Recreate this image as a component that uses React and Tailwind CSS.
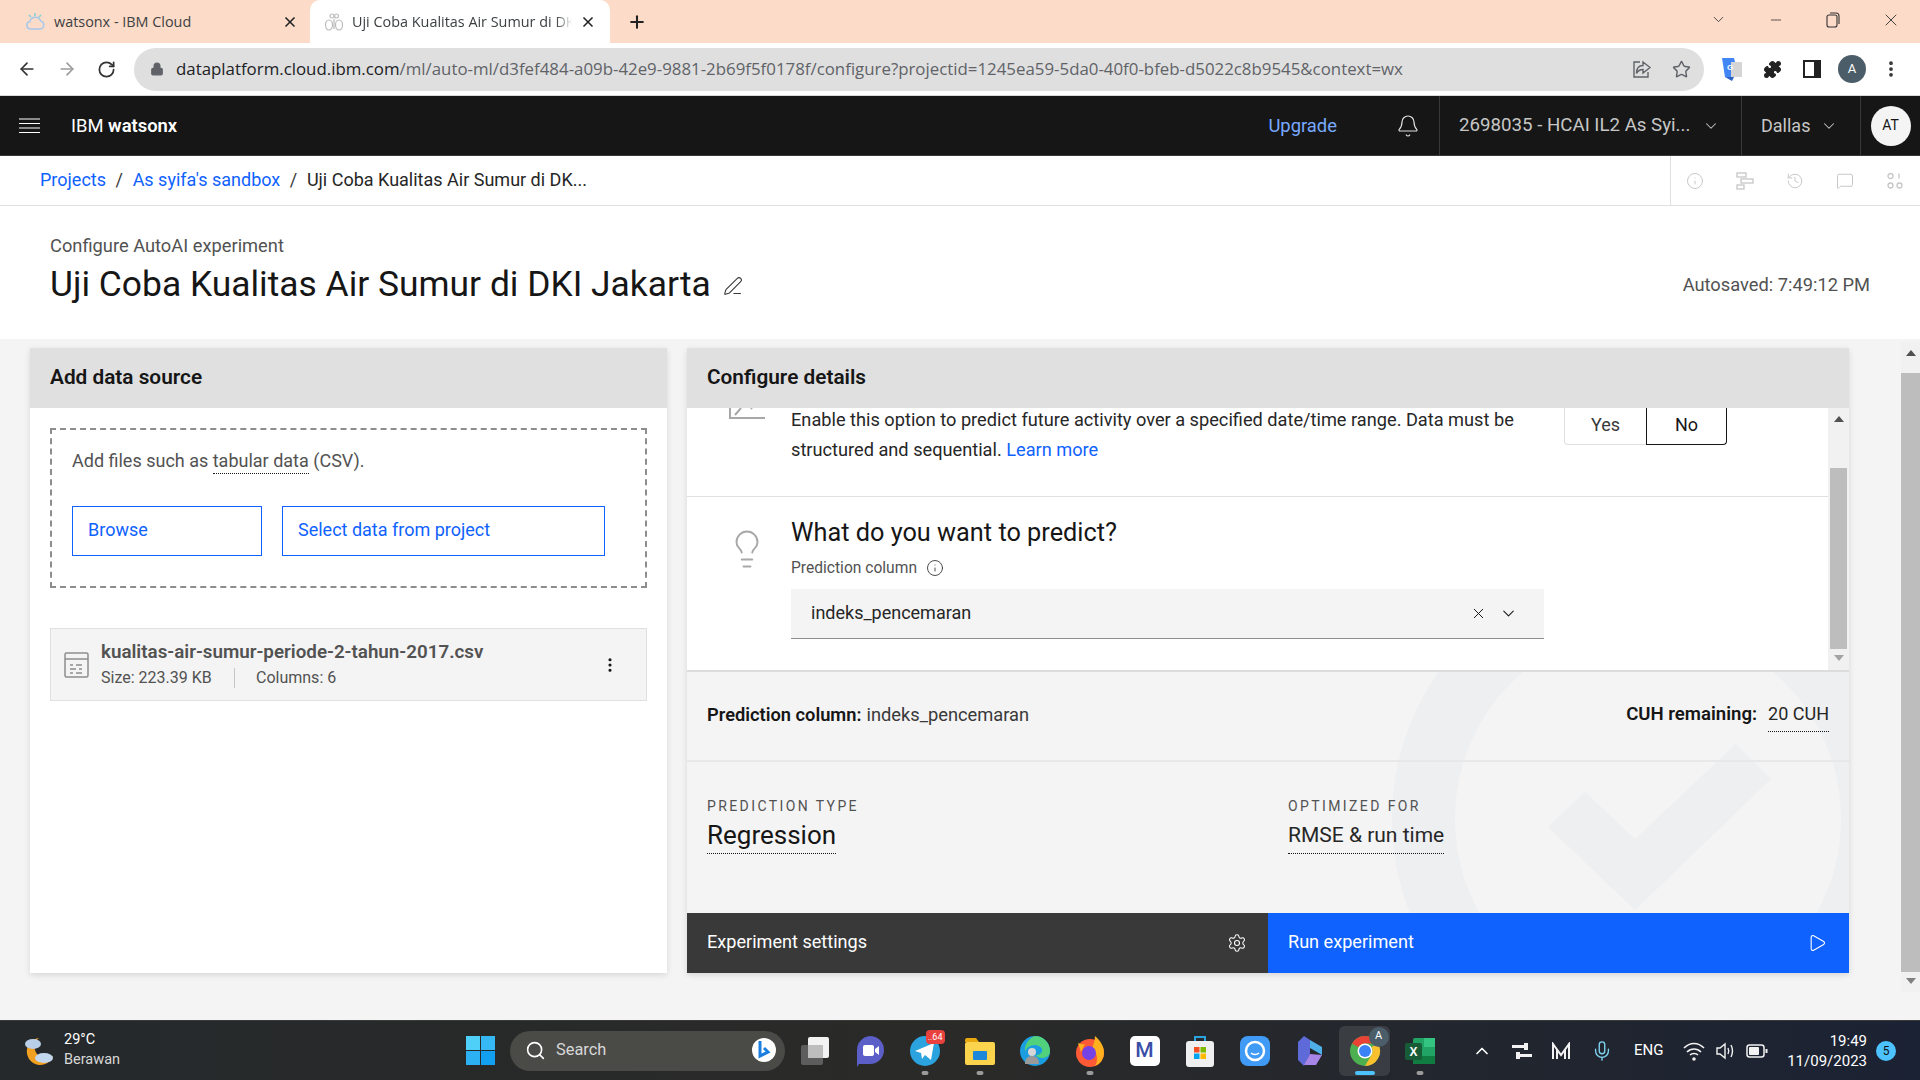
import {
  ArrowLeft, ArrowRight, RotateCw, Lock, Star, Bell, ChevronDown, ChevronUp, Info, X, Plus, Minus,
  Lightbulb, Settings, Play, PenLine, Search, Mic, EllipsisVertical, Puzzle, History, MessageSquare,
} from "lucide-react";

function Tab({ active, icon, title }) {
  return (
    <div className={active ? "flex h-full w-[300px] items-center gap-2 rounded-t-[10px] bg-white pl-[14px] pr-[14px]" : "flex h-full w-[310px] items-center gap-2 pl-[24px] pr-[12px]"}>
      {icon}
      <span className={active ? "min-w-0 flex-1 overflow-hidden whitespace-nowrap text-[14.4px] text-[#3c4043] [mask-image:linear-gradient(to_left,transparent,black_16px)]" : "min-w-0 flex-1 overflow-hidden whitespace-nowrap text-[14.4px] text-[#3c4043]"}>{title}</span>
      <X size={16} strokeWidth={2.5} className="shrink-0 text-[#222]" />
    </div>
  );
}

function CloudFav() {
  return (
    <svg width="22" height="22" viewBox="0 0 22 22" fill="none" className="shrink-0">
      <path d="M6 18h10a4 4 0 0 0 .6-7.9A5.5 5.5 0 0 0 6 10.5 3.8 3.8 0 0 0 6 18z" stroke="#a8c8ec" strokeWidth="1.5" />
      <path d="M11 2v3M5 4l2 2M17 4l-2 2" stroke="#7fd0d8" strokeWidth="1.5" />
    </svg>
  );
}

function BeeFav() {
  return (
    <svg width="20" height="20" viewBox="0 0 20 20" fill="none" stroke="#bbb" strokeWidth="1.2" className="shrink-0">
      <circle cx="8" cy="4" r="2" />
      <circle cx="12.5" cy="4" r="2" />
      <ellipse cx="5" cy="13" rx="3.5" ry="5" />
      <ellipse cx="15" cy="13" rx="3.5" ry="5" />
      <path d="M10 7v10" />
    </svg>
  );
}

function Crumb({ children }) {
  return <span className="text-[#0f62fe]">{children}</span>;
}

function PanelHeader({ children }) {
  return (
    <div className="flex h-[60px] shrink-0 items-center bg-[#e0e0e0] pb-[1px] pl-[20px] text-[20.8px] font-semibold text-[#161616]">
      {children}
    </div>
  );
}

function TaskIcon({ dot, active, children }) {
  return (
    <div className={active ? "relative mx-[2px] flex h-[50px] w-[51px] items-center justify-center rounded-md bg-white/10" : "relative flex h-[50px] w-[55px] items-center justify-center"}>
      {children}
      {dot && <span className="absolute bottom-[1px] left-1/2 h-[4px] w-[7px] -translate-x-1/2 rounded-full bg-[#9b9b9b]" />}
      {active && <span className="absolute bottom-[1px] left-1/2 h-[4px] w-[20px] -translate-x-1/2 rounded-full bg-[#4cc2ff]" />}
    </div>
  );
}

function WeatherIcon() {
  return (
    <svg width="32" height="32" viewBox="0 0 32 32">
      <path d="M15 3A13.500 13.500 0 1 0 29 21A11 11 0 0 1 15 3z" fill="#f2a01f" />
      <ellipse cx="9" cy="9" rx="8" ry="5" fill="#b9cfe8" />
      <ellipse cx="20" cy="23" rx="9" ry="5" fill="#c2d6ee" />
    </svg>
  );
}

function WinLogo() {
  return (
    <svg width="29" height="29" viewBox="0 0 29 29">
      <rect width="14" height="14" fill="#4fd0f8" />
      <rect x="15" width="14" height="14" fill="#35b8f4" />
      <rect y="15" width="14" height="14" fill="#2cb2f3" />
      <rect x="15" y="15" width="14" height="14" fill="#129ff0" />
    </svg>
  );
}

function TaskView() {
  return (
    <svg width="30" height="30" viewBox="0 0 30 30">
      <rect x="1" y="9" width="22" height="20" rx="2" fill="#5d5d5d" />
      <rect x="8" y="1" width="21" height="21" rx="2" fill="#f2f2f2" />
      <rect x="8" y="9" width="15" height="13" fill="#bdbdbd" />
    </svg>
  );
}

function MeetIcon() {
  return (
    <svg width="30" height="32" viewBox="0 0 30 32">
      <path d="M15 1a14 14 0 0 1 0 28H4l-2 3V15A14 14 0 0 1 15 1z" fill="#5b5fc7" />
      <rect x="8" y="10" width="11" height="11" rx="2" fill="#fff" />
      <path d="M20 14l4-3v9l-4-3z" fill="#fff" />
    </svg>
  );
}

function TelegramIcon() {
  return (
    <div className="relative">
      <svg width="30" height="30" viewBox="0 0 30 30">
        <circle cx="15" cy="15" r="15" fill="#2aa3de" />
        <path d="M5 15l19-8-3 17-6-5-3 4-1-6z" fill="#fff" />
      </svg>
      <span className="absolute right-[-5px] top-[-6px] rounded-[4px] bg-[#e8413e] px-[2px] text-[9px] leading-[14px] text-white">..64</span>
    </div>
  );
}

function FolderIcon() {
  return (
    <svg width="30" height="28" viewBox="0 0 30 28">
      <path d="M0 3a2 2 0 0 1 2-2h9l3 4H0z" fill="#e8a80f" />
      <rect y="5" width="30" height="23" rx="2" fill="#fcd34d" />
      <rect x="8" y="14" width="14" height="9" rx="1" fill="#1e88d8" />
    </svg>
  );
}

function EdgeIcon() {
  return (
    <svg width="30" height="32" viewBox="0 0 30 32">
      <circle cx="15" cy="16" r="15" fill="#1b9de2" />
      <path d="M15 1a15 15 0 0 1 15 15c0 5-4 7-8 7-5 0-6-3-6-3 8 0 9-9-1-10-5 0-9 3-10 7A15 15 0 0 1 15 1z" fill="#52d17c" />
      <circle cx="12" cy="17" r="4" fill="#d6d6d6" />
      <path d="M5 29c0-6 3-8 7-8s7 2 7 8z" fill="#9a9a9a" />
    </svg>
  );
}

function FirefoxIcon() {
  return (
    <svg width="30" height="32" viewBox="0 0 30 32">
      <circle cx="15" cy="18" r="14" fill="#ff5a36" />
      <path d="M20 1c6 5 9 11 9 17a14 14 0 0 1-9 13c4-6 2-14-3-17 1-4 3-8 3-13z" fill="#ffb01f" />
      <path d="M3 8c3 1 5 2 7 1L6 17z" fill="#ffb01f" />
      <circle cx="14" cy="18" r="7" fill="#7542e5" />
    </svg>
  );
}

function MailIcon() {
  return (
    <div className="flex h-[30px] w-[30px] items-center justify-center rounded-[5px] bg-white text-[21px] font-medium text-[#3a4ea8]">M</div>
  );
}

function StoreIcon() {
  return (
    <svg width="30" height="32" viewBox="0 0 30 32">
      <path d="M10 6V2h10v4" fill="none" stroke="#2aa3de" strokeWidth="2" />
      <rect x="1" y="6" width="28" height="26" rx="3" fill="#efefef" />
      <rect x="9" y="12" width="5.5" height="5.5" fill="#f25022" />
      <rect x="15.5" y="12" width="5.5" height="5.5" fill="#7fba00" />
      <rect x="9" y="18.5" width="5.5" height="5.5" fill="#00a4ef" />
      <rect x="15.5" y="18.5" width="5.5" height="5.5" fill="#ffb900" />
    </svg>
  );
}

function ChatIcon() {
  return (
    <svg width="30" height="30" viewBox="0 0 30 30">
      <rect width="30" height="30" rx="8" fill="#3f9bf5" />
      <circle cx="15" cy="15" r="9" fill="none" stroke="#fff" strokeWidth="2.5" />
      <path d="M11 17c2 2 6 2 8 0" fill="none" stroke="#fff" strokeWidth="1.5" />
    </svg>
  );
}

function CopilotIcon() {
  return (
    <svg width="28" height="32" viewBox="0 0 28 32">
      <path d="M8 1l6 4v14l-6 12-6-6V7z" fill="#5d6ad8" />
      <path d="M14 5l12 7v8l-12-7z" fill="#4fb0e8" />
      <path d="M26 20l-6 10H8l6-11z" fill="#a886e8" />
    </svg>
  );
}

function ChromeIcon() {
  return (
    <div className="relative">
      <svg width="32" height="32" viewBox="0 0 32 32">
        <circle cx="16" cy="16" r="15" fill="#4caf50" />
        <path d="M16 1a15 15 0 0 1 13 7.5H16a7.5 7.5 0 0 0-6.5 3.7L3 8.5A15 15 0 0 1 16 1z" fill="#ea4335" />
        <path d="M29 8.5A15 15 0 0 1 16 31l6.5-11.3A7.5 7.5 0 0 0 22.5 12z" fill="#fbc02d" />
        <circle cx="16" cy="16" r="7.5" fill="#fff" />
        <circle cx="16" cy="16" r="6" fill="#3b82f6" />
      </svg>
      <span className="absolute right-[-8px] top-[-8px] flex h-[20px] w-[20px] items-center justify-center rounded-full bg-[#4a5d68] text-[11px] text-white">A</span>
    </div>
  );
}

function ExcelIcon() {
  return (
    <svg width="30" height="30" viewBox="0 0 30 30">
      <rect x="8" y="2" width="22" height="26" rx="2" fill="#21a366" />
      <rect x="19" y="2" width="11" height="9" fill="#33c481" />
      <rect x="8" y="20" width="22" height="8" fill="#107c41" />
      <rect y="7" width="17" height="17" rx="2" fill="#185c37" />
      <text x="8.5" y="20" textAnchor="middle" fontSize="12" fontWeight="700" fill="#fff" fontFamily="Liberation Sans">X</text>
    </svg>
  );
}

export default function App() {
  return (
    <div className="flex h-[1080px] w-[1920px] flex-col overflow-hidden bg-white font-['Roboto',sans-serif]">
      {/* browser tabs */}
      <div className="flex h-[43px] shrink-0 items-stretch bg-[#fcdbc8] font-['Open_Sans',sans-serif]">
        <Tab icon={<CloudFav />} title="watsonx - IBM Cloud" />
        <Tab active icon={<BeeFav />} title="Uji Coba Kualitas Air Sumur di DK" />
        <div className="ml-[17px] flex items-center">
          <Plus size={20} strokeWidth={2.5} className="text-[#222]" />
        </div>
        <div className="ml-auto flex items-center pb-[4px] text-[#333]">
          <ChevronDown size={17} strokeWidth={1.2} className="mr-[41px]" />
          <Minus size={16} strokeWidth={1.2} className="mr-[42px]" />
          <svg width="14" height="16" viewBox="0 0 14 16" fill="none" stroke="#333" strokeWidth="1.1" className="mr-[41px]">
            <rect x="1" y="3" width="10" height="12" rx="2" />
            <path d="M4 1h6a3 3 0 0 1 3 3v8" />
          </svg>
          <X size={20} strokeWidth={1.1} className="mr-[19px]" />
        </div>
      </div>

      {/* address bar */}
      <div className="flex h-[53px] shrink-0 items-center border-b border-[#d9d9d9] bg-white pl-[17px]">
        <ArrowLeft size={20} strokeWidth={2} className="text-[#333]" />
        <ArrowRight size={20} strokeWidth={2} className="ml-[20px] text-[#9c9c9c]" />
        <RotateCw size={19} strokeWidth={2.2} className="ml-[20px] text-[#333]" />
        <div className="ml-[18px] flex h-[43px] w-[1570px] items-center rounded-full bg-[#dfdfdf] pl-[16px] font-['Open_Sans',sans-serif]">
          <Lock size={14} fill="#5f6368" strokeWidth={2} className="text-[#5f6368]" />
          <div className="ml-[12px] whitespace-nowrap text-[16.85px]">
            <span className="text-[#202124]">dataplatform.cloud.ibm.com</span>
            <span className="text-[#5f6368]">/ml/auto-ml/d3fef484-a09b-42e9-9881-2b69f5f0178f/configure?projectid=1245ea59-5da0-40f0-bfeb-d5022c8b9545&context=wx</span>
          </div>
          <svg width="20" height="20" viewBox="0 0 20 20" fill="none" stroke="#5f6368" strokeWidth="1.4" className="ml-auto">
            <path d="M8 3H2v15h14v-5" />
            <path d="M11 3l7 5.5-7 5.5v-3.5c-3 0-5 1-6.5 4 0-5 2.500-8 6.500-8z" />
          </svg>
          <Star size={19} strokeWidth={1.8} className="ml-[20px] mr-[13px] text-[#5f6368]" />
        </div>
        <svg width="20" height="24" viewBox="0 0 20 24" className="ml-[18px]">
          <path d="M0 1h12l5 19H3z" fill="#4285f4" />
          <path d="M9 5h11v15H9z" fill="#d5d5d5" />
          <path d="M3 20h9l-2 4z" fill="#2f62c4" />
          <text x="5" y="13" fontSize="8" fontWeight="700" fill="#fff" fontFamily="Liberation Sans">G</text>
        </svg>
        <Puzzle size={19} fill="#222" strokeWidth={1.5} className="ml-[21px] text-[#222]" />
        <svg width="18" height="18" viewBox="0 0 18 18" className="ml-[21px]">
          <rect x="1" y="1" width="16" height="16" fill="none" stroke="#222" strokeWidth="2" />
          <rect x="11" y="1" width="6" height="16" fill="#222" />
        </svg>
        <div className="ml-[17px] flex h-[28px] w-[28px] items-center justify-center rounded-full bg-[#4a5d68] text-[13px] text-white">A</div>
        <EllipsisVertical size={20} strokeWidth={2.5} className="ml-[15px] text-[#333]" />
      </div>

      {/* watsonx header */}
      <div className="flex h-[60px] shrink-0 items-stretch border-b border-[#393939] bg-[#161616] text-[#c6c6c6]">
        <div className="flex w-[71px] items-center pl-[19px]">
          <svg width="21" height="16" viewBox="0 0 21 16" stroke="#fff" strokeWidth="1.2">
            <path d="M0 1h21M0 5.500h21M0 10h21M0 14.500h21" />
          </svg>
        </div>
        <div className="flex items-center text-[18.4px] text-white">
          IBM&nbsp;<span className="font-semibold">watsonx</span>
        </div>
        <div className="ml-auto flex items-center pr-[40px] text-[18.4px] text-[#78a9ff]">Upgrade</div>
        <div className="flex w-[62px] items-center justify-center">
          <Bell size={24} strokeWidth={1.2} className="text-[#e0e0e0]" />
        </div>
        <div className="flex w-[302px] items-center border-l border-[#393939] pl-[19px] text-[18.7px]">
          <span className="w-[242px] whitespace-nowrap">2698035 - HCAI IL2 As Syi...</span>
          <ChevronDown size={18} strokeWidth={1.4} className="ml-[1px]" />
        </div>
        <div className="flex w-[119px] items-center border-l border-[#393939] pl-[19px] text-[18px]">
          <span className="w-[57px]">Dallas</span>
          <ChevronDown size={18} strokeWidth={1.4} className="ml-[2px]" />
        </div>
        <div className="flex w-[60px] items-center justify-center border-l border-[#393939]">
          <div className="flex h-[40px] w-[40px] items-center justify-center rounded-full bg-[#f4f4f4] text-[14px] text-[#161616]">AT</div>
        </div>
      </div>

      {/* breadcrumb */}
      <div className="flex h-[50px] shrink-0 items-stretch border-b border-[#e0e0e0] bg-white">
        <div className="flex items-center gap-[9.6px] pb-[2px] pl-[40px] text-[18px] text-[#393939]">
          <Crumb>Projects</Crumb>
          <span>/</span>
          <Crumb>As syifa's sandbox</Crumb>
          <span>/</span>
          <span className="text-[#262626]">Uji Coba Kualitas Air Sumur di DK...</span>
        </div>
        <div className="ml-auto flex w-[250px] items-center gap-[32px] border-l border-[#e0e0e0] pl-[15px] text-[#c6c6c6]">
          <Info size={18} strokeWidth={1.3} />
          <svg width="18" height="18" viewBox="0 0 18 18" fill="none" stroke="currentColor" strokeWidth="1.3">
            <rect x="1" y="1" width="9" height="4" />
            <rect x="5" y="7" width="12" height="4" />
            <rect x="1" y="13" width="7" height="4" />
          </svg>
          <History size={18} strokeWidth={1.3} />
          <MessageSquare size={18} strokeWidth={1.3} />
          <svg width="18" height="18" viewBox="0 0 18 18" fill="none" stroke="currentColor" strokeWidth="1.3">
            <circle cx="4.500" cy="4" r="2.500" />
            <path d="M13 1.500v5" />
            <circle cx="4.500" cy="13.500" r="2.500" />
            <circle cx="13.500" cy="13.500" r="2.500" />
          </svg>
        </div>
      </div>

      {/* page title */}
      <div className="flex h-[133px] shrink-0 bg-white pl-[50px] pr-[50px]">
        <div className="pt-[28px]">
          <div className="text-[18.3px] leading-[24px] text-[#525252]">Configure AutoAI experiment</div>
          <div className="mt-[4px] flex items-center">
            <span className="text-[35.4px] leading-[44px] text-[#161616]">Uji Coba Kualitas Air Sumur di DKI Jakarta</span>
            <PenLine size={20} strokeWidth={1.3} className="ml-[12px] mt-[4px] text-[#393939]" />
          </div>
        </div>
        <div className="ml-auto pt-[66px] text-[18.3px] leading-[26px] text-[#525252]">Autosaved: 7:49:12 PM</div>
      </div>

      {/* main */}
      <div className="flex min-h-0 flex-1 items-start bg-[#f4f4f4] pt-[9px]">
        <div className="ml-[30px] flex h-[625px] w-[637px] shrink-0 flex-col bg-white shadow-[0_2px_6px_rgba(0,0,0,0.12)]">
          <PanelHeader>Add data source</PanelHeader>
          <div className="px-[20px] pt-[20px]">
            <div className="h-[160px] border-2 border-dashed border-[#8d8d8d] pl-[20px] pt-[18px]">
              <div className="text-[18px] leading-[26px] text-[#525252]">
                Add files such as <span className="border-b border-dotted border-[#161616] pb-[2px]">tabular data</span> (CSV).
              </div>
              <div className="mt-[32px] flex gap-[20px]">
                <div className="flex h-[50px] w-[190px] items-center border border-[#0f62fe] pb-[3px] pl-[15px] text-[18px] text-[#0f62fe]">Browse</div>
                <div className="flex h-[50px] w-[323px] items-center border border-[#0f62fe] pb-[3px] pl-[15px] text-[18px] text-[#0f62fe]">Select data from project</div>
              </div>
            </div>
            <div className="mt-[40px] flex h-[73px] items-center border border-[#e0e0e0] bg-[#f4f4f4] pl-[13px] pr-[27px]">
              <svg width="25" height="26" viewBox="0 0 25 26" fill="none" stroke="#8d8d8d" strokeWidth="1.500">
                <rect x="1" y="1" width="23" height="24" rx="1.500" />
                <path d="M1 7h23M6 13h3M12 13h6M6 17h6M15 17h3M6 21h3M12 21h6" />
              </svg>
              <div className="ml-[12px]">
                <div className="text-[18.8px] font-semibold leading-[22px] text-[#525252]">kualitas-air-sumur-periode-2-tahun-2017.csv</div>
                <div className="mt-[5px] flex items-center text-[16px] leading-[20px] text-[#525252]">
                  <span className="w-[134px] border-r border-[#c6c6c6]">Size: 223.39 KB</span>
                  <span className="ml-[21px]">Columns: 6</span>
                </div>
              </div>
              <EllipsisVertical size={18} strokeWidth={2.2} className="ml-auto text-[#161616]" />
            </div>
          </div>
        </div>

        <div className="ml-[20px] flex h-[625px] w-[1162px] shrink-0 flex-col bg-white shadow-[0_2px_6px_rgba(0,0,0,0.12)]">
          <PanelHeader>Configure details</PanelHeader>
          <div className="flex h-[262px] shrink-0">
            <div className="min-w-0 flex-1">
              <div className="flex h-[89px] border-b border-[#e0e0e0]">
                <svg width="36" height="11" viewBox="0 0 36 11" fill="none" stroke="#a8a8a8" strokeWidth="2" className="ml-[42px] shrink-0">
                  <path d="M1 0v10h35M6 7l6-7M22 0l1 1" />
                </svg>
                <div className="ml-[26px] mt-[-3px] w-[773px] text-[18.2px] leading-[30px] text-[#262626]">
                  <div className="whitespace-nowrap">Enable this option to predict future activity over a specified date/time range. Data must be</div>
                  <div className="whitespace-nowrap">structured and sequential. <span className="text-[#0f62fe]">Learn more</span></div>
                </div>
                <div className="flex h-[37px] text-[18px] text-[#393939]">
                  <div className="flex w-[82px] items-center justify-center rounded-bl-[4px] border-b border-l border-[#e0e0e0] pb-[3px]">Yes</div>
                  <div className="flex w-[81px] items-center justify-center rounded-br-[4px] border-b border-l border-r border-[#161616] pb-[3px] text-[#161616]">No</div>
                </div>
              </div>
              <div className="flex pt-[20px]">
                <Lightbulb size={42} strokeWidth={1.1} className="ml-[39px] mt-[11px] shrink-0 text-[#a8a8a8]" />
                <div className="ml-[23px] w-[753px]">
                  <div className="text-[25.3px] leading-[32px] text-[#161616]">What do you want to predict?</div>
                  <div className="mt-[9px] flex items-center text-[15.6px] leading-[20px] text-[#525252]">
                    Prediction column
                    <Info size={18} strokeWidth={1.2} className="ml-[9px] text-[#393939]" />
                  </div>
                  <div className="mt-[11px] flex h-[50px] items-center border-b border-[#8d8d8d] bg-[#f4f4f4] pb-[3px] pl-[20px] pr-[26px] text-[18px] text-[#262626]">
                    indeks_pencemaran
                    <X size={17} strokeWidth={1.4} className="ml-auto mr-[12px] mt-[3px] text-[#161616]" />
                    <ChevronDown size={19} strokeWidth={1.3} className="mt-[3px] text-[#161616]" />
                  </div>
                </div>
              </div>
            </div>
            {/* inner scrollbar */}
            <div className="flex w-[21px] shrink-0 flex-col items-center bg-[#f1f1f1] pt-[8px]">
              <span className="h-0 w-0 border-x-[5px] border-b-[6px] border-x-transparent border-b-[#505050]" />
              <div className="mt-[46px] h-[181px] w-[17px] bg-[#bdbdbd]" />
              <span className="mt-[6px] h-0 w-0 border-x-[5px] border-t-[6px] border-x-transparent border-t-[#a3a3a3]" />
            </div>
          </div>

          {/* summary */}
          <div className="relative flex min-h-0 flex-1 flex-col overflow-hidden border-t-2 border-[#dcdcdc] bg-[#f4f4f4]">
            <svg className="absolute left-0 top-0" width="1162" height="243" viewBox="687 670 1162 243" fill="#eeeff1">
              <path fillRule="evenodd" d="M1648 561a256 256 0 1 0 0 512a256 256 0 1 0 0-512zM1648 624a193 193 0 1 1 0 386a193 193 0 1 1 0-386z" />
              <path d="M1548 825L1635 908L1771 777L1736 742L1635 837L1585 790z" />
            </svg>
            <div className="relative flex h-[90px] shrink-0 items-center border-b-2 border-[#e8e8e8] px-[20px] text-[18.3px] text-[#393939]">
              <span className="mb-[3px] font-semibold text-[#161616]">Prediction column:</span>
              <span className="mb-[3px] ml-[5px]">indeks_pencemaran</span>
              <span className="mb-[3px] ml-auto text-[18.6px] font-semibold text-[#161616]">CUH remaining:</span>
              <span className="ml-[11px] border-b border-dotted border-[#161616] pb-[4px] text-[18px] text-[#262626]">20 CUH</span>
            </div>
            <div className="relative flex pl-[20px] pt-[34px]">
              <div className="w-[581px]">
                <div className="text-[14px] leading-[20px] tracking-[2.4px] text-[#525252]">PREDICTION TYPE</div>
                <div className="mt-[1px] inline-block border-b border-dotted border-[#161616] text-[26px] leading-[36px] text-[#161616]">Regression</div>
              </div>
              <div>
                <div className="text-[14px] leading-[20px] tracking-[2.4px] text-[#525252]">OPTIMIZED FOR</div>
                <div className="mt-[1px] inline-block border-b border-dotted border-[#161616] text-[21px] leading-[36px] text-[#262626]">RMSE &amp; run time</div>
              </div>
            </div>
          </div>

          {/* footer buttons */}
          <div className="flex h-[60px] shrink-0 text-[18.1px] text-white">
            <div className="flex w-[581px] items-center justify-between bg-[#393939] pb-[2px] pl-[20px] pr-[21px]">
              Experiment settings
              <Settings size={20} strokeWidth={1.3} className="mt-[2px]" />
            </div>
            <div className="flex flex-1 items-center justify-between bg-[#0f62fe] pb-[2px] pl-[20px] pr-[22px]">
              Run experiment
              <Play size={20} strokeWidth={1.3} className="mt-[2px]" />
            </div>
          </div>
        </div>

        {/* page scrollbar */}
        <div className="ml-auto mt-[-6px] flex h-[650px] w-[19px] flex-col items-center bg-[#f1f1f1] pt-[8px]">
          <span className="h-0 w-0 border-x-[5px] border-b-[6px] border-x-transparent border-b-[#505050]" />
          <div className="mt-[17px] h-[599px] w-[19px] bg-[#bdbdbd]" />
          <span className="mt-[6px] h-0 w-0 border-x-[5px] border-t-[6px] border-x-transparent border-t-[#808080]" />
        </div>
      </div>

      {/* taskbar */}
      <div className="flex h-[60px] shrink-0 items-center border-t border-[#3a3a3a] bg-gradient-to-r from-[#25292b] via-[#2a2a28] to-[#1b2233] text-white">
        <div className="flex w-[453px] items-center pl-[24px]">
          <WeatherIcon />
          <div className="mb-[2px] ml-[8px] text-[14.5px] leading-[20px]">
            <div>29°C</div>
            <div className="text-[#d8d8d8]">Berawan</div>
          </div>
        </div>
        <TaskIcon><WinLogo /></TaskIcon>
        <div className="ml-[2px] flex h-[40px] w-[275px] items-center rounded-full bg-[#4a4a47] pl-[15px] pr-[8px] text-[#d8d8d8]">
          <Search size={21} strokeWidth={1.8} className="text-white" />
          <span className="ml-[10px] text-[16.4px]">Search</span>
          <svg width="26" height="30" viewBox="0 0 26 30" className="ml-auto">
            <circle cx="13" cy="14" r="12" fill="#fff" />
            <path d="M9 5v15l8-4-4-4" fill="none" stroke="#1b7fe0" strokeWidth="3" />
          </svg>
        </div>
        <div className="ml-[2px] flex items-center">
          <TaskIcon><TaskView /></TaskIcon>
          <TaskIcon><MeetIcon /></TaskIcon>
          <TaskIcon dot><TelegramIcon /></TaskIcon>
          <TaskIcon dot><FolderIcon /></TaskIcon>
          <TaskIcon><EdgeIcon /></TaskIcon>
          <TaskIcon dot><FirefoxIcon /></TaskIcon>
          <TaskIcon><MailIcon /></TaskIcon>
          <TaskIcon><StoreIcon /></TaskIcon>
          <TaskIcon><ChatIcon /></TaskIcon>
          <TaskIcon><CopilotIcon /></TaskIcon>
          <TaskIcon active><ChromeIcon /></TaskIcon>
          <TaskIcon dot><ExcelIcon /></TaskIcon>
        </div>
        <div className="ml-[25px] flex flex-1 items-center pr-[24px]">
          <ChevronUp size={20} strokeWidth={2} />
          <svg width="20" height="16" viewBox="0 0 20 16" className="ml-[20px]" fill="#f2f2f2">
            <rect x="0" y="2" width="13" height="3" />
            <rect x="12" y="0" width="4" height="7" />
            <rect x="6" y="11" width="14" height="3" />
            <rect x="4" y="9" width="4" height="7" />
          </svg>
          <svg width="18" height="18" viewBox="0 0 18 18" className="ml-[20px]" fill="none" stroke="#f2f2f2" strokeWidth="2">
            <path d="M1 17V2l8 11 8-11v15M5 17V8M13 17V8" />
          </svg>
          <Mic size={22} strokeWidth={1.5} className="ml-[21px] text-[#7fd3f0]" />
          <span className="ml-[21px] text-[15px]">ENG</span>
          <div className="ml-[20px] flex items-center gap-[10px]">
            <svg width="22" height="20" viewBox="0 0 22 20" fill="none" stroke="#f2f2f2" strokeWidth="1.6">
              <path d="M1 7c6-6 14-6 20 0M4 11c4-4 10-4 14 0M7 14c2-2 6-2 8 0" />
              <circle cx="11" cy="18" r="1" fill="#f2f2f2" />
            </svg>
            <svg width="20" height="20" viewBox="0 0 20 20" fill="none" stroke="#f2f2f2" strokeWidth="1.4">
              <path d="M2 7h3l5-4v14l-5-4H2zM13 7c1 2 1 4 0 6M16 4c2 4 2 8 0 12" />
            </svg>
            <svg width="22" height="14" viewBox="0 0 22 14" className="ml-[1px]">
              <rect x="1" y="1" width="17" height="12" rx="2.500" fill="none" stroke="#f2f2f2" strokeWidth="1.5" />
              <rect x="3" y="3" width="10" height="8" rx="1" fill="#f2f2f2" />
              <rect x="19.500" y="5" width="2" height="4" fill="#f2f2f2" />
            </svg>
          </div>
          <div className="ml-auto text-right text-[15px] leading-[20px]">
            <div>19:49</div>
            <div>11/09/2023</div>
          </div>
          <span className="ml-[9px] flex h-[20px] w-[20px] shrink-0 items-center justify-center rounded-full bg-[#4cc2ff] text-[12px] text-[#111]">5</span>
        </div>
      </div>
    </div>
  );
}
